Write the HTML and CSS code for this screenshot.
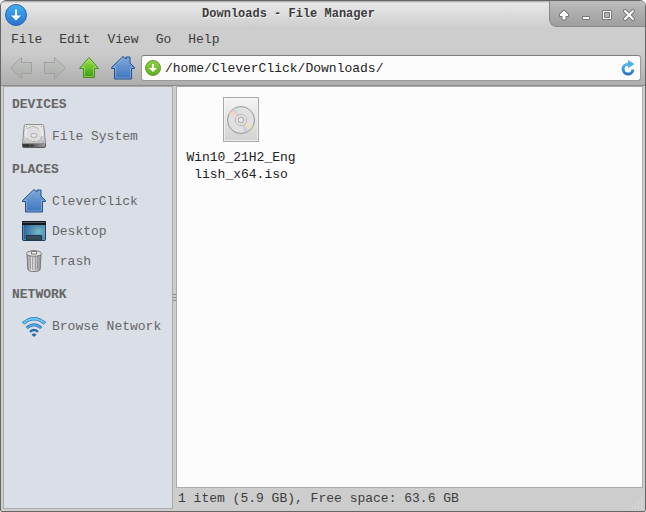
FILE: index.html
```html
<!DOCTYPE html>
<html lang="en">
<head>
<meta charset="utf-8">
<title>Downloads - File Manager</title>
<link rel="stylesheet" href="styles.css">
</head>
<body>
<svg class="defs" aria-hidden="true">
  <defs>
    <linearGradient id="blue" x1="0" y1="0" x2="0" y2="1"><stop offset="0" stop-color="#7fa9dc"/><stop offset="1" stop-color="#3e76bb"/></linearGradient>
    <linearGradient id="badge" x1="0" y1="0" x2="0" y2="1"><stop offset="0" stop-color="#3fb0f5"/><stop offset="1" stop-color="#2a6fd0"/></linearGradient>
    <linearGradient id="green" x1="0" y1="0" x2="0" y2="1"><stop offset="0" stop-color="#a4e04a"/><stop offset="0.5" stop-color="#6cc52a"/><stop offset="1" stop-color="#379a10"/></linearGradient>
    <linearGradient id="lime" x1="0" y1="0" x2="0" y2="1"><stop offset="0" stop-color="#8ed13e"/><stop offset="1" stop-color="#5fae22"/></linearGradient>
    <linearGradient id="off" x1="0" y1="0" x2="0" y2="1"><stop offset="0" stop-color="#c2c5c1"/><stop offset="1" stop-color="#a9ada7"/></linearGradient>
    <linearGradient id="sky" x1="0" y1="0" x2="0" y2="1"><stop offset="0" stop-color="#55b8ea"/><stop offset="1" stop-color="#2a74c8"/></linearGradient>
    <linearGradient id="metal" x1="0" y1="0" x2="0" y2="1"><stop offset="0" stop-color="#e9e9e9"/><stop offset="1" stop-color="#c4c4c4"/></linearGradient>
    <linearGradient id="base" x1="0" y1="0" x2="1" y2="0"><stop offset="0" stop-color="#333"/><stop offset="0.4" stop-color="#555"/><stop offset="1" stop-color="#a0a0a0"/></linearGradient>
    <radialGradient id="screen" cx="0.7" cy="0.55" r="0.75"><stop offset="0" stop-color="#79b9c6"/><stop offset="1" stop-color="#255a94"/></radialGradient>
    <linearGradient id="can" x1="0" y1="0" x2="1" y2="0"><stop offset="0" stop-color="#9a9a9a"/><stop offset="0.4" stop-color="#efefef"/><stop offset="1" stop-color="#8d8d8d"/></linearGradient>
    <linearGradient id="paper" x1="0" y1="0" x2="0" y2="1"><stop offset="0" stop-color="#f4f4f4"/><stop offset="1" stop-color="#d2d2d2"/></linearGradient>
    <symbol id="home" viewBox="0 0 24 24">
      <path d="M12 .5 15 3V1h4v6l4.500 4.500V12.500H20.500V23H3.500V12.500H.5V11.500z" fill="url(#blue)" stroke="#24508f" stroke-linejoin="round"/>
      <path d="M12 2 2.500 11.500h2V22h15V11.500h2" fill="none" stroke="#a8c6ea" stroke-opacity=".5"/>
    </symbol>
  </defs>
</svg>
<div class="window">
  <header class="titlebar">
    <svg class="app-icon" width="24" height="24" viewBox="0 0 24 24"><circle cx="12" cy="12" r="10.500" fill="url(#badge)" stroke="#2c67ac"/><path d="M11 6.500h2v6h4L12 17.500l-5-5h4z" fill="#fff"/></svg>
    <h1 class="title">Downloads - File Manager</h1>
    <div class="controls">
      <button aria-label="Shade"><svg width="14" height="14" viewBox="0 0 14 14"><path d="M7 2.500 11 6.500V8H8.500v3.500h-3V8H3V6.500z" fill="#fff" stroke="#777" stroke-width="2" paint-order="stroke" stroke-linejoin="round"/></svg></button>
      <button aria-label="Minimize"><svg width="14" height="14" viewBox="0 0 14 14"><path d="M3.500 8.500h7v3h-7z" fill="#fff" stroke="#777"/></svg></button>
      <button aria-label="Maximize"><svg width="14" height="14" viewBox="0 0 14 14"><path d="M2.500 2.500h9v9h-9z" fill="#fff" stroke="#777"/><path d="M4.500 4.500h5v5h-5z" fill="#b5b5b5" stroke="#777"/></svg></button>
      <button aria-label="Close"><svg width="14" height="14" viewBox="0 0 14 14"><path d="m3 3 8 8m0-8-8 8" stroke="#777" stroke-width="4" stroke-linecap="round"/><path d="m3 3 8 8m0-8-8 8" stroke="#fff" stroke-width="2" stroke-linecap="round"/></svg></button>
    </div>
  </header>
  <nav class="menubar" aria-label="Menu">
    <button>File</button><button>Edit</button><button>View</button><button>Go</button><button>Help</button>
  </nav>
  <div class="toolbar">
    <button aria-label="Back" disabled><svg width="24" height="24" viewBox="0 0 24 24"><path d="M1.500 12 12.500 1.500v5h10v11h-10v5z" fill="url(#off)" stroke="#9ea29c" stroke-linejoin="round"/></svg></button>
    <button aria-label="Forward" disabled><svg width="24" height="24" viewBox="0 0 24 24"><path d="M22.500 12 11.500 1.500v5h-10v11h10v5z" fill="url(#off)" stroke="#9ea29c" stroke-linejoin="round"/></svg></button>
    <button aria-label="Up"><svg width="24" height="24" viewBox="0 0 24 24"><path d="M12 1.500 21.500 12.500H17.500v9h-11v-9H2.500z" fill="url(#green)" stroke="#4b8a2c" stroke-linejoin="round"/><path d="M12 3.200 4.700 11.500h2.800v9h9v-9h2.800z" fill="none" stroke="#c5f08a" stroke-opacity=".5"/></svg></button>
    <button aria-label="Home"><svg width="24" height="24"><use href="#home"/></svg></button>
    <div class="location">
      <svg width="16" height="16" viewBox="0 0 16 16"><circle cx="8" cy="8" r="7.500" fill="url(#lime)" stroke="#6a9a3c"/><path d="M7 4h2v4h3l-4 4-4-4h3z" fill="#fff"/></svg>
      <input type="text" aria-label="Location" value="/home/CleverClick/Downloads/">
      <button aria-label="Reload"><svg width="16" height="16" viewBox="0 0 16 16"><path d="M9 4.200H8A4.900 4.900 0 1 0 12.900 9.500" fill="none" stroke="url(#sky)" stroke-width="3"/><path d="M8 0v8.200L14.500 4z" fill="#4db0e6"/></svg></button>
    </div>
  </div>
  <div class="body">
    <aside class="sidebar">
      <h2>DEVICES</h2>
      <a href="#fs"><svg width="24" height="24" viewBox="0 0 24 24"><path d="M.5 19.500h23V22q0 1.500-1.500 1.500H2Q.5 23.500.5 22z" fill="url(#base)" stroke="#5a5a5a"/><path d="M3.500.5h17q1 0 1.300 1.500l1.700 17.500H.5L2.200 2Q2.500.5 3.500.5z" fill="url(#metal)" stroke="#8d8d8d"/><ellipse cx="12" cy="10" rx="8.500" ry="7.500" fill="#dedede" stroke="#f8f8f8"/><path d="M5 5q6-5 12 0M4 14q7 6 14 2l2-4" fill="none" stroke="#b0b0b0"/><ellipse cx="12" cy="11.500" rx="3" ry="2" fill="#ececec" stroke="#a8a8a8"/><path d="M4 2.500h1m14 0h1M2.500 17.500h1m17 0h1" stroke="#999"/><path d="M4 21.500h3m2 0h2" stroke="#222"/></svg>File System</a>
      <h2>PLACES</h2>
      <a href="#home-folder"><svg width="24" height="24"><use href="#home"/></svg>CleverClick</a>
      <a href="#desktop"><svg width="24" height="24" viewBox="0 0 24 24"><rect x=".5" y="2.500" width="23" height="19" rx="1" fill="url(#screen)" stroke="#1d3b5e"/><path d="M0 3q0-1 1-1h22q1 0 1 1v3H0z" fill="#15161b"/><path d="M1 3.500h22" stroke="#555a66"/><path d="M1.500 6v14.500h21V6" fill="none" stroke="#78a5c8" stroke-opacity=".6"/><path d="M4.500 16.500h15V21h-15z" fill="#344c5a" stroke="#22394d"/></svg>Desktop</a>
      <a href="#trash"><svg width="24" height="24" viewBox="0 0 24 24"><path d="M5 4.500h14l-.8 15.500q-.2 2.500-6.200 2.500T5.800 20z" fill="url(#can)" stroke="#777"/><path d="m8 7 .5 13M10.700 8v13M13.300 8v13M16 7l-.5 13" stroke="#909090"/><ellipse cx="12" cy="4.500" rx="7.500" ry="2.800" fill="#e2e2e2" stroke="#7a7a7a"/><path d="M9.500 2.500h5v2.500h-5z" fill="#f5f5f5" stroke="#777"/></svg>Trash</a>
      <h2>NETWORK</h2>
      <a href="#network"><svg width="24" height="24" viewBox="0 0 24 24"><g fill="none"><path d="M1 9.500q11-9.500 22 0" stroke="#2f7fc2" stroke-width="3.500"/><path d="M1.500 9.200q10.500-8.800 21 0" stroke="#6cc6f0" stroke-width="1.800"/><path d="M4.800 14q7.200-6.600 14.400 0" stroke="#2a70ba" stroke-width="3"/><path d="M5.300 13.700q6.700-6 13.400 0" stroke="#56aee8" stroke-width="1.400"/><path d="M8 17.800q4-3.400 8 0" stroke="#2769b6" stroke-width="2.400"/></g><path d="M9.500 20.500q2.500-2 5 0L12 23z" fill="#2464b4"/></svg>Browse Network</a>
    </aside>
    <div class="splitter"><i></i><i></i><i></i></div>
    <div class="main">
      <main class="files">
        <a class="file" href="#iso">
          <svg width="36" height="46" viewBox="0 0 36 46"><rect x=".5" y=".5" width="35" height="44" fill="url(#paper)" stroke="#a9a9a9"/><rect x="1.500" y="1.500" width="33" height="42" fill="none" stroke="#f6f6f6" stroke-opacity=".7"/><circle cx="18" cy="24" r="13.500" fill="#bdbdbd" opacity=".5"/><circle cx="18" cy="23" r="13.500" fill="#e0e0e0" stroke="#9a9a9a"/><g opacity=".7"><path d="M18 23 6.500 17A13 13 0 0 1 9 13.600z" fill="#f2d6c8"/><path d="M18 23 9 13.600A13 13 0 0 1 11.500 11.700z" fill="#f4b8cc"/><path d="M18 23 11.500 11.700A13 13 0 0 1 14.500 10.500z" fill="#b6e6dc"/><path d="m18 23 11.500 6A13 13 0 0 1 27 32.400z" fill="#f4e2a8"/><path d="m18 23 9 9.400a13 13 0 0 1-2.500 1.900z" fill="#c0e4c4"/><path d="m18 23 6.500 11.300a13 13 0 0 1-3 1.200z" fill="#c9bdea"/></g><circle cx="18" cy="23" r="5.500" fill="#ededed" stroke="#b5b5b5"/><circle cx="18" cy="23" r="3" fill="#e4e4e4" stroke="#a2a2a2"/></svg>
          <span>Win10_21H2_English_x64.iso</span>
        </a>
      </main>
      <footer class="status"><span>1 item (5.9 GB), Free space: 63.6 GB</span>
        <svg width="12" height="12" viewBox="0 0 12 12"><path d="M9 1h2M6 4h2m1 0h2M3 7h2m1 0h2m1 0h2M0 10h2m1 0h2m1 0h2m1 0h2" stroke="#dcdcdc" stroke-width="2"/><path d="M9 1h1M6 4h1m2 0h1M3 7h1m2 0h1m2 0h1M0 10h1m2 0h1m2 0h1m2 0h1" stroke="#b8b8b8"/></svg>
      </footer>
    </div>
  </div>
</div>
</body>
</html>
```
FILE: styles.css
```css
* { box-sizing: border-box; }

body {
  margin: 0;
  background: #fff;
  font: 13px/17px "Liberation Mono", monospace;
  color: #3c3c3c;
}

.defs {
  position: absolute;
  width: 0;
  height: 0;
}

button, input {
  margin: 0;
  padding: 0;
  border: 0;
  background: none;
  font: inherit;
  color: inherit;
}

svg {
  display: block;
  flex: none;
}

a {
  color: inherit;
  text-decoration: none;
}

.window {
  display: flex;
  flex-direction: column;
  min-height: 100vh;
  border: 1px solid #666;
  border-radius: 6px 6px 2px 2px;
  background: #cdcdcd;
  overflow: hidden;
}

.titlebar {
  display: flex;
  height: 27px;
  background: linear-gradient(#a5a5a5 0, #e8e8e8 2px, #cdcdcd 100%);
}

.app-icon { margin: 2px 0 0 3px; }

.title {
  flex: 1;
  margin: 0;
  font-size: 12px;
  line-height: 27px;
  text-align: center;
  color: #3c3c3c;
  text-shadow: 1px 1px 0 #f4f4f4;
}

.controls {
  display: flex;
  height: 26px;
  width: 96px;
  padding: 0 5px 0 3px;
  border: 1px solid #888;
  border-width: 0 0 1px 1px;
  border-bottom-left-radius: 8px;
  background: linear-gradient(#bcbcbc, #9e9e9e);
}

.controls button {
  display: grid;
  flex: 1;
  place-items: center;
  padding-top: 2px;
}

.menubar {
  display: flex;
  gap: 17px;
  height: 23px;
  padding: 0 10px;
}

.toolbar {
  display: flex;
  align-items: center;
  gap: 10px;
  height: 35px;
  padding: 0 4px 0 8px;
  border-bottom: 1px solid #8c8c8c;
  background: linear-gradient(#cdcdcd, #adadad);
}

.location {
  display: flex;
  flex: 1;
  align-items: center;
  gap: 4px;
  height: 26px;
  margin-left: -4px;
  padding: 0 4px 0 3px;
  border: 1px solid #999;
  border-top-color: #808080;
  border-radius: 3px;
  background: #fcfcfc;
}

.location input {
  flex: 1;
  min-width: 0;
  color: #222;
  outline: none;
}

.body {
  display: flex;
  flex: 1;
  padding: 0 2px 2px;
}

.sidebar {
  width: 170px;
  border: 1px solid #aaa;
  background: #dadee6;
  color: #666;
}

.sidebar h2 {
  margin: 0;
  padding-left: 8px;
  font-size: 13px;
  line-height: 35px;
}

.sidebar a {
  display: flex;
  align-items: center;
  gap: 6px;
  height: 30px;
  padding: 0 0 2px 18px;
}

.splitter {
  display: flex;
  flex-direction: column;
  justify-content: center;
  gap: 2px;
  width: 3px;
}

.splitter i {
  height: 1px;
  background: #888;
}

.main {
  display: flex;
  flex: 1;
  flex-direction: column;
  min-width: 0;
}

.files {
  flex: 1;
  padding: 10px 6px;
  border: 1px solid #aaa;
  background: #fcfcfc;
  color: #222;
}

.file {
  display: flex;
  flex-direction: column;
  align-items: center;
  gap: 6px;
  width: 116px;
}

.file span {
  width: 112px;
  text-align: center;
  word-break: break-all;
}

.status {
  display: flex;
  justify-content: space-between;
  align-items: flex-end;
  height: 21px;
  padding-left: 2px;
}

.status span { line-height: 21px; }
```
